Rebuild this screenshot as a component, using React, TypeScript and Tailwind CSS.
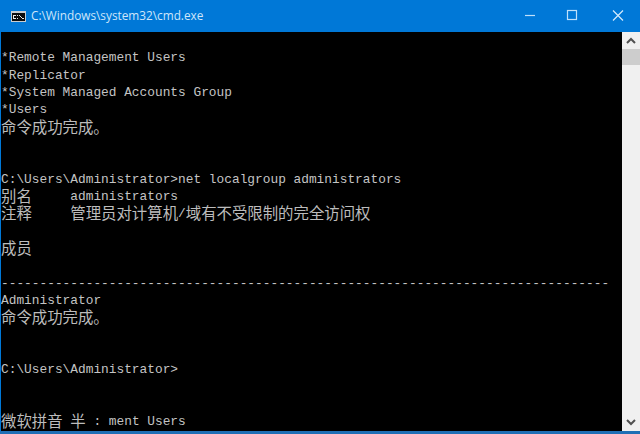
import React from 'react';

const lines = [
  '',
  '*Remote Management Users',
  '*Replicator',
  '*System Managed Accounts Group',
  '*Users',
  '命令成功完成。',
  '',
  '',
  'C:\\Users\\Administrator>net localgroup administrators',
  '别名     administrators',
  '注释     管理员对计算机/域有不受限制的完全访问权',
  '',
  '成员',
  '',
  '-'.repeat(79),
  'Administrator',
  '命令成功完成。',
  '',
  '',
  'C:\\Users\\Administrator>',
  '',
  '',
  '微软拼音 半 : ment Users',
];

// CJK glyphs take two console cells, so they get a larger size than latin
function ConsoleLine({ text }: { text: string }) {
  const parts = text.split(/([\u4e00-\u9fff。]+)/).filter(Boolean);
  return (
    <div className="h-[17.33px] leading-[17.33px] whitespace-pre">
      {parts.map((part, i) =>
        /[\u4e00-\u9fff。]/.test(part) ? (
          <span key={i} className="align-[-1.5px] text-[15.4px] leading-[0] font-['Noto_Sans_CJK_SC',sans-serif] text-[#bcbcbc]">{part}</span>
        ) : (
          <span key={i}>{part}</span>
        )
      )}
    </div>
  );
}

export default function App() {
  return (
    <div className="flex h-[434px] w-[640px] flex-col overflow-hidden bg-[#0078d7]">
      <div className="flex h-8 shrink-0 items-center text-[#cfe6fa]">
        <svg width="15" height="11" viewBox="0 0 15 11" className="ml-[11px]">
          <rect width="15" height="11" fill="#c8ccd0" />
          <rect x="1" y="2" width="13" height="8" fill="#0c0c0c" />
          <path d="M2 4h3v1H3v2h2v1H2zM6 4h1v1H6zM6 7h1v1H6zM8 4h1v1h1v1h1v1h1v1h-1V7h-1V6H9V5H8zM12 7h1v1h-1z" fill="#e8e8e8" />
        </svg>
        <span className="ml-[5px] font-['Open_Sans',sans-serif] text-[11.8px]">C:\Windows\system32\cmd.exe</span>
        <div className="ml-auto flex items-center">
          <svg width="46" height="32" viewBox="0 0 46 32" stroke="#bfe0fa" fill="none">
            <path d="M18 15.5h10" strokeWidth="1.2" />
          </svg>
          <svg width="46" height="32" viewBox="0 0 46 32" stroke="#bfe0fa" fill="none" className="-ml-[3px]">
            <rect x="17.5" y="10.5" width="9" height="9" strokeWidth="1.2" />
          </svg>
          <svg width="46" height="32" viewBox="0 0 46 32" stroke="#d5ebfc" fill="none" className="-mr-[1px] -ml-[1px]">
            <path d="M18 10.5l10 10M28 10.5l-10 10" strokeWidth="1.2" />
          </svg>
        </div>
      </div>
      <div className="ml-px flex h-[399px] min-h-0 bg-black">
        <div className="min-w-0 flex-1 overflow-hidden font-['Liberation_Mono',monospace] text-[12.83px] text-[#c4c4c4]">
          {lines.map((line, i) => (
            <ConsoleLine key={i} text={line} />
          ))}
        </div>
        <div className="flex w-[18px] shrink-0 flex-col bg-[#f0f0f0]">
          <div className="flex h-[17px] items-center justify-center">
            <svg width="10" height="7" viewBox="0 0 10 7" fill="none" stroke="#505050" strokeWidth="2">
              <path d="M1 6l4-4 4 4" />
            </svg>
          </div>
          <div className="h-[16px] bg-[#cdcdcd]" />
          <div className="mt-auto flex h-[17px] items-center justify-center">
            <svg width="10" height="7" viewBox="0 0 10 7" fill="none" stroke="#505050" strokeWidth="2">
              <path d="M1 1l4 4 4-4" />
            </svg>
          </div>
        </div>
      </div>
      <div className="h-[3px] shrink-0 bg-[#1f6fb5]" />
    </div>
  );
}
